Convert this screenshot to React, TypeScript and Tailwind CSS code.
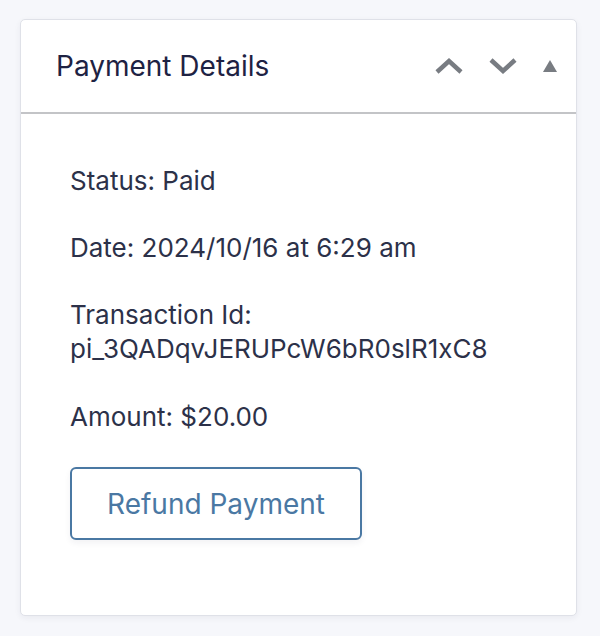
export default function App() {
    const font = { fontFamily: "Inter, 'Noto Sans', sans-serif" };
    return (
        <div className="min-h-[636px] w-[600px] bg-[#f6f7fb] pt-[19px] pl-[20px] pr-[23px]" style={font}>
            <div className="rounded-[5px] border border-[#dfe1e8] bg-white shadow-[0_2px_6px_rgba(30,34,67,0.06)]">
                {/* Header */}
                <div className="flex h-[94px] items-center justify-between border-b-2 border-[#c3c4c7] pl-[35px] pr-[18px]">
                    <h2 className="text-[28px] font-normal text-[#1e2243] leading-none">Payment Details</h2>
                    <div className="flex items-center gap-[24px] text-[#787c82]">
                        <svg width="30" height="18" viewBox="0 0 30 18" fill="none">
                            <path d="M3 15 L15 4 L27 15" stroke="currentColor" strokeWidth="4.5" />
                        </svg>
                        <svg width="30" height="18" viewBox="0 0 30 18" fill="none">
                            <path d="M3 3 L15 14 L27 3" stroke="currentColor" strokeWidth="4.5" />
                        </svg>
                        <svg width="16" height="14" viewBox="0 0 16 14">
                            <path d="M8 1 L15 13 L1 13 Z" fill="currentColor" />
                        </svg>
                    </div>
                </div>

                {/* Body */}
                <div className="pl-[49px] pt-[50px] pb-[75px] text-[26px] leading-[34px] text-[#2c3149]">
                    <p>Status: Paid</p>
                    <p className="mt-[33px]">Date: 2024/10/16 at 6:29 am</p>
                    <p className="mt-[33px]">
                        Transaction Id:
                        <br />
                        pi_3QADqvJERUPcW6bR0slR1xC8
                    </p>
                    <p className="mt-[34px]">Amount: $20.00</p>
                    <button className="mt-[33px] h-[73px] w-[292px] rounded-[6px] border-2 border-[#4a78a3] bg-white text-[28px] text-[#4a78a3] shadow-[0_3px_6px_rgba(30,34,67,0.06)]">
                        Refund Payment
                    </button>
                </div>
            </div>
        </div>
    );
}
